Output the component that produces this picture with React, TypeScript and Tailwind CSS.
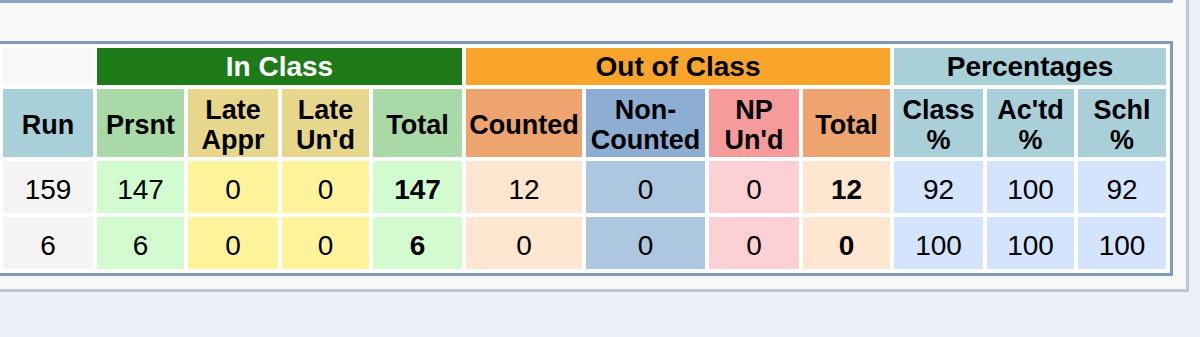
import React from "react";

const font = { fontFamily: '"Liberation Sans", Arial, sans-serif' };

type Row = {
  run: string;
  prsnt: string;
  lateA: string;
  lateU: string;
  totIn: string;
  counted: string;
  nonCounted: string;
  np: string;
  totOut: string;
  cls: string;
  actd: string;
  schl: string;
};

const rows: Row[] = [
  { run: "159", prsnt: "147", lateA: "0", lateU: "0", totIn: "147", counted: "12", nonCounted: "0", np: "0", totOut: "12", cls: "92", actd: "100", schl: "92" },
  { run: "6", prsnt: "6", lateA: "0", lateU: "0", totIn: "6", counted: "0", nonCounted: "0", np: "0", totOut: "0", cls: "100", actd: "100", schl: "100" },
];

const gh = "h-[37px] p-0 text-center align-middle text-[28px] leading-[37px] font-bold";
const hd = "h-[68px] p-0 pt-[3px] text-center align-middle text-[27px] leading-[30px] font-bold text-black";
const dc = "h-[52px] p-0 pt-[6px] text-center align-middle text-[28px] leading-[32px] text-black";

export default function App() {
  return (
    <div className="w-[1200px] h-[337px] overflow-hidden bg-[#eef0f8]" style={font}>
      <div className="ml-[-20px] w-[1209px] bg-[#f7f8f8] border-r-[3px] border-b-[3px] border-[#c3c7cd] pl-[16px] pr-[13px] pb-[13px]">
        <div className="h-[3px] w-[1177px] bg-[#8da3bf]" />
        <div className="mt-[38px] w-[1177px] border-[3px] border-[#8199b7] bg-white">
          <table className="table-fixed w-[1171px] border-separate border-spacing-[4px]">
            <colgroup>
              <col className="w-[90px]" />
              <col className="w-[87px]" />
              <col className="w-[90px]" />
              <col className="w-[87px]" />
              <col className="w-[89px]" />
              <col className="w-[116px]" />
              <col className="w-[119px]" />
              <col className="w-[90px]" />
              <col className="w-[87px]" />
              <col className="w-[89px]" />
              <col className="w-[87px]" />
              <col className="w-[88px]" />
            </colgroup>
            <thead>
              <tr>
                <th className="h-[37px] p-0 bg-[#f8f8f8]" />
                <th colSpan={4} className={`${gh} text-white bg-[#1f7b1a]`}>
                  In Class
                </th>
                <th colSpan={4} className={`${gh} text-black bg-[#f9a42b]`}>
                  Out of Class
                </th>
                <th colSpan={3} className={`${gh} text-black bg-[#a9d0d8]`}>
                  Percentages
                </th>
              </tr>
              <tr>
                <th className={`${hd} bg-[#a9cfd8]`}>Run</th>
                <th className={`${hd} bg-[#a9d9a7]`}>Prsnt</th>
                <th className={`${hd} bg-[#e6d78c]`}>Late<br />Appr</th>
                <th className={`${hd} bg-[#e6d78c]`}>Late<br />Un'd</th>
                <th className={`${hd} bg-[#a9d9a7]`}>Total</th>
                <th className={`${hd} bg-[#eda46e]`}>Counted</th>
                <th className={`${hd} bg-[#8eadd2]`}>Non-<br />Counted</th>
                <th className={`${hd} bg-[#f69b9c]`}>NP<br />Un'd</th>
                <th className={`${hd} bg-[#eda46e]`}>Total</th>
                <th className={`${hd} bg-[#a9d0d8]`}>Class<br />%</th>
                <th className={`${hd} bg-[#a9d0d8]`}>Ac'td<br />%</th>
                <th className={`${hd} bg-[#a9d0d8]`}>Schl<br />%</th>
              </tr>
            </thead>
            <tbody>
              {rows.map((r, i) => (
                <tr key={i}>
                  <td className={`${dc} bg-[#f4f4f4]`}>{r.run}</td>
                  <td className={`${dc} bg-[#d2fcd0]`}>{r.prsnt}</td>
                  <td className={`${dc} bg-[#fff49c]`}>{r.lateA}</td>
                  <td className={`${dc} bg-[#fff49c]`}>{r.lateU}</td>
                  <td className={`${dc} bg-[#d2fcd0] font-bold`}>{r.totIn}</td>
                  <td className={`${dc} bg-[#fee6d1]`}>{r.counted}</td>
                  <td className={`${dc} bg-[#aec7e1]`}>{r.nonCounted}</td>
                  <td className={`${dc} bg-[#fdd0d4]`}>{r.np}</td>
                  <td className={`${dc} bg-[#fee6d1] font-bold`}>{r.totOut}</td>
                  <td className={`${dc} bg-[#d4e4fd]`}>{r.cls}</td>
                  <td className={`${dc} bg-[#d4e4fd]`}>{r.actd}</td>
                  <td className={`${dc} bg-[#d4e4fd]`}>{r.schl}</td>
                </tr>
              ))}
            </tbody>
          </table>
        </div>
      </div>
    </div>
  );
}
